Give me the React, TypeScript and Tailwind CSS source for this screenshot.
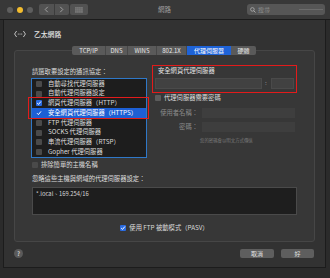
import React from "react";

function Check({ on = false, sel = false, dim = false }: { on?: boolean; sel?: boolean; dim?: boolean }) {
  if (sel) {
    return (
      <span className="w-[6px] h-[6px] flex items-center justify-center shrink-0">
        <svg width="6" height="6" viewBox="0 0 6 6">
          <path d="M1 3.2 L2.4 4.6 L5 1.4" stroke="#ffffff" strokeWidth="1" fill="none" />
        </svg>
      </span>
    );
  }
  if (on) {
    return (
      <span className="w-[6px] h-[6px] rounded-[1px] bg-[#2a6be0] flex items-center justify-center shrink-0">
        <svg width="6" height="6" viewBox="0 0 6 6">
          <path d="M1.2 3.1 L2.5 4.4 L4.9 1.5" stroke="#ffffff" strokeWidth="1" fill="none" />
        </svg>
      </span>
    );
  }
  return <span className={`w-[6px] h-[6px] rounded-[1px] shrink-0 ${dim ? "bg-[#4a4a4a]" : "bg-[#5c5c5c]"}`} />;
}

const rows: { t: string; on?: boolean; sel?: boolean }[] = [
  { t: "自動尋找代理伺服器" },
  { t: "自動代理伺服器設定" },
  { t: "網頁代理伺服器（HTTP）", on: true },
  { t: "安全網頁代理伺服器（HTTPS）", on: true, sel: true },
  { t: "FTP 代理伺服器" },
  { t: "SOCKS 代理伺服器" },
  { t: "串流代理伺服器（RTSP）" },
  { t: "Gopher 代理伺服器" },
];

export default function App() {
  return (
    <div className="w-[330px] h-[278px] bg-[#2b2b2b] overflow-hidden font-['Noto_Sans_CJK_TC','Noto_Sans',sans-serif] text-[#dcdcdc] text-[6.3px] leading-none">
      {/* title bar */}
      <div className="h-[20px] bg-[#383838] border-b border-[#1b1b1b] flex items-center">
        <div className="flex items-center gap-[4px] ml-[7px]">
          <span className="w-[6px] h-[6px] rounded-full bg-[#5e5e5e]" />
          <span className="w-[6px] h-[6px] rounded-full bg-[#f4bd2e]" />
          <span className="w-[6px] h-[6px] rounded-full bg-[#5e5e5e]" />
        </div>
        <div className="ml-[6px] w-[30px] h-[11px] rounded-[2px] bg-[#525252] flex">
          <div className="flex-1 flex items-center justify-center border-r border-[#3c3c3c]">
            <svg width="5" height="7" viewBox="0 0 5 7">
              <path d="M3.8 0.8 L1.2 3.5 L3.8 6.2" stroke="#a8a8a8" strokeWidth="0.9" fill="none" />
            </svg>
          </div>
          <div className="flex-1 flex items-center justify-center">
            <svg width="5" height="7" viewBox="0 0 5 7">
              <path d="M1.2 0.8 L3.8 3.5 L1.2 6.2" stroke="#a8a8a8" strokeWidth="0.9" fill="none" />
            </svg>
          </div>
        </div>
        <div className="ml-[1px] w-[18px] h-[11px] rounded-[2px] bg-[#525252] flex items-center justify-center">
          <svg width="8" height="6" viewBox="0 0 8 6">
            {[0, 1, 2, 3].map((c) =>
              [0, 1, 2].map((r) => <rect key={`${c}-${r}`} x={c * 2 + 0.3} y={r * 2 + 0.3} width="1.3" height="1.3" fill="#9a9a9a" />)
            )}
          </svg>
        </div>
        <div className="flex-1 flex justify-center pr-[6px] text-[#a0a0a0] text-[6.5px]">網路</div>
        <div className="mr-[5px] w-[78px] h-[11px] rounded-[3px] bg-[#565656] flex items-center pl-[3px] relative">
          <svg width="6" height="6" viewBox="0 0 6 6">
            <circle cx="2.4" cy="2.4" r="1.8" stroke="#b0b0b0" strokeWidth="0.8" fill="none" />
            <path d="M3.7 3.7 L5.5 5.5" stroke="#b0b0b0" strokeWidth="0.9" />
          </svg>
          <span className="ml-[2px] text-[#8e8e8e] text-[6px]">搜尋</span>
          <span className="ml-auto mr-[2px] w-[24px] h-[1px] bg-[#6c6c6c]" />
        </div>
      </div>

      {/* sheet */}
      <div className="ml-[3px] w-[323px] h-[248px] bg-[#323232] border-x border-b border-[#1c1c1c] flex flex-col">
        <div className="mt-[9px] h-[10px] flex items-center pl-[10px]">
          <svg width="12" height="8" viewBox="0 0 12 8">
            <path d="M2.6 1 L0.6 4 L2.6 7" stroke="#d0d0d0" strokeWidth="0.9" fill="none" />
            <path d="M9.4 1 L11.4 4 L9.4 7" stroke="#d0d0d0" strokeWidth="0.9" fill="none" />
            <circle cx="4.3" cy="4" r="0.6" fill="#d0d0d0" />
            <circle cx="6" cy="4" r="0.6" fill="#d0d0d0" />
            <circle cx="7.7" cy="4" r="0.6" fill="#d0d0d0" />
          </svg>
          <span className="ml-[8px] text-[6.8px] text-[#e6e6e6] font-medium">乙太網路</span>
        </div>

        {/* tabs */}
        <div className="mt-[7px] h-[9px] flex justify-center relative z-10 pr-[1px]">
          <div className="flex rounded-[2px] overflow-hidden text-[6px] text-[#e8e8e8] bg-[#5a5a5a]">
            {[
              ["TCP/IP", "w-[34px]"],
              ["DNS", "w-[22px]"],
              ["WINS", "w-[29px]"],
              ["802.1X", "w-[30px]"],
            ].map(([t, w]) => (
              <div key={t} className={`${w} h-[9px] flex items-center justify-center border-r border-[#474747]`}>
                {t}
              </div>
            ))}
            <div className="w-[44px] h-[9px] flex items-center justify-center bg-[#1e63d8] text-white">代理伺服器</div>
            <div className="w-[25px] h-[9px] flex items-center justify-center">硬體</div>
          </div>
        </div>

        {/* group box */}
        <div className="-mt-[5px] ml-[10px] w-[301px] h-[192px] rounded-[3px] border border-[#464646] bg-[#373737] pt-[14px] pl-[16px] flex flex-col">
          <div className="flex gap-[5px]">
            {/* left col */}
            <div className="w-[116px] flex flex-col">
              <div className="mt-[3px] h-[8px] flex items-center pl-[1px]">請選取要設定的通訊協定：</div>
              <div className="mt-[2px] relative">
                <div className="h-[80px] border-[1.5px] border-[#2f78c8] bg-[#1d1d1d] flex flex-col">
                  {rows.map((r) => (
                    <div
                      key={r.t}
                      className={`flex-1 flex items-center pl-[4px] ${r.sel ? "bg-[#1d5fd4] text-white" : ""}`}
                    >
                      <Check on={r.on} sel={r.sel} dim />
                      <span className="ml-[6px] whitespace-nowrap">{r.t}</span>
                    </div>
                  ))}
                </div>
                <div className="absolute left-[-3px] top-[19px] w-[121px] h-[22px] border-[1.5px] border-[#e31b1b]" />
              </div>
            </div>

            {/* right col */}
            <div className="w-[145px] flex flex-col">
              <div className="h-[28px] border-[1.5px] border-[#e31b1b] pt-[1.5px] pl-[1.5px] flex flex-col">
                <div className="h-[8px] flex items-center pl-[3.5px] text-[#e2e2e2]">安全網頁代理伺服器</div>
                <div className="mt-[2.5px] flex items-center">
                  <div className="w-[107px] h-[11px] bg-[#414141] border border-[#4a4a4a]" />
                  <span className="w-[9px] text-center text-[#9a9a9a]">:</span>
                  <div className="w-[23px] h-[11px] bg-[#414141] border border-[#4a4a4a]" />
                </div>
              </div>
              <div className="mt-[1px] h-[8px] flex items-center pl-[3px]">
                <Check />
                <span className="ml-[3px]">代理伺服器需要密碼</span>
              </div>
              <div className="mt-[6px] h-[10px] flex items-center">
                <span className="w-[46px] text-right text-[#8a8a8a]">使用者名稱：</span>
                <div className="ml-[4px] w-[93px] h-[10px] bg-[#3e3e3e]" />
              </div>
              <div className="mt-[4px] h-[10px] flex items-center">
                <span className="w-[46px] text-right text-[#8a8a8a]">密碼：</span>
                <div className="ml-[4px] w-[93px] h-[10px] bg-[#3e3e3e]" />
              </div>
              <div className="mt-[6px] pl-[48px] text-[4.4px] text-[#7a7a7a]">您的密碼會以明文方式傳送</div>
            </div>
          </div>

          <div className="mt-[3px] h-[8px] flex items-center ml-[1px]">
            <Check dim />
            <span className="ml-[3px]">排除簡單的主機名稱</span>
          </div>
          <div className="mt-[6px] h-[8px] flex items-center ml-[1px]">忽略這些主機與網域的代理伺服器設定：</div>
          <div className="mt-[4px] ml-[1px] w-[265px] h-[28px] bg-[#1e1e1e] border border-[#4a4a4a] pl-[3px] pt-[3px] text-[5.8px] text-[#d8d8d8]">
            *.local、169.254/16
          </div>
          <div className="mt-[9px] h-[8px] flex items-center justify-center pr-[16px]">
            <Check on />
            <span className="ml-[3px]">使用 FTP 被動模式（PASV）</span>
          </div>
        </div>

        {/* bottom */}
        <div className="mt-[7px] h-[9px] flex items-center pl-[10px]">
          <div className="w-[9px] h-[9px] rounded-full bg-[#5a5a5a] flex items-center justify-center text-[6px] text-[#c8c8c8] font-bold">?</div>
          <div className="ml-auto flex gap-[7px] mr-[11px]">
            <div className="w-[34px] h-[9px] rounded-[2px] bg-[#5e5e5e] flex items-center justify-center text-[6px] text-[#e0e0e0]">取消</div>
            <div className="w-[33px] h-[9px] rounded-[2px] bg-[#5e5e5e] flex items-center justify-center text-[6px] text-[#e0e0e0]">好</div>
          </div>
        </div>
      </div>
    </div>
  );
}
